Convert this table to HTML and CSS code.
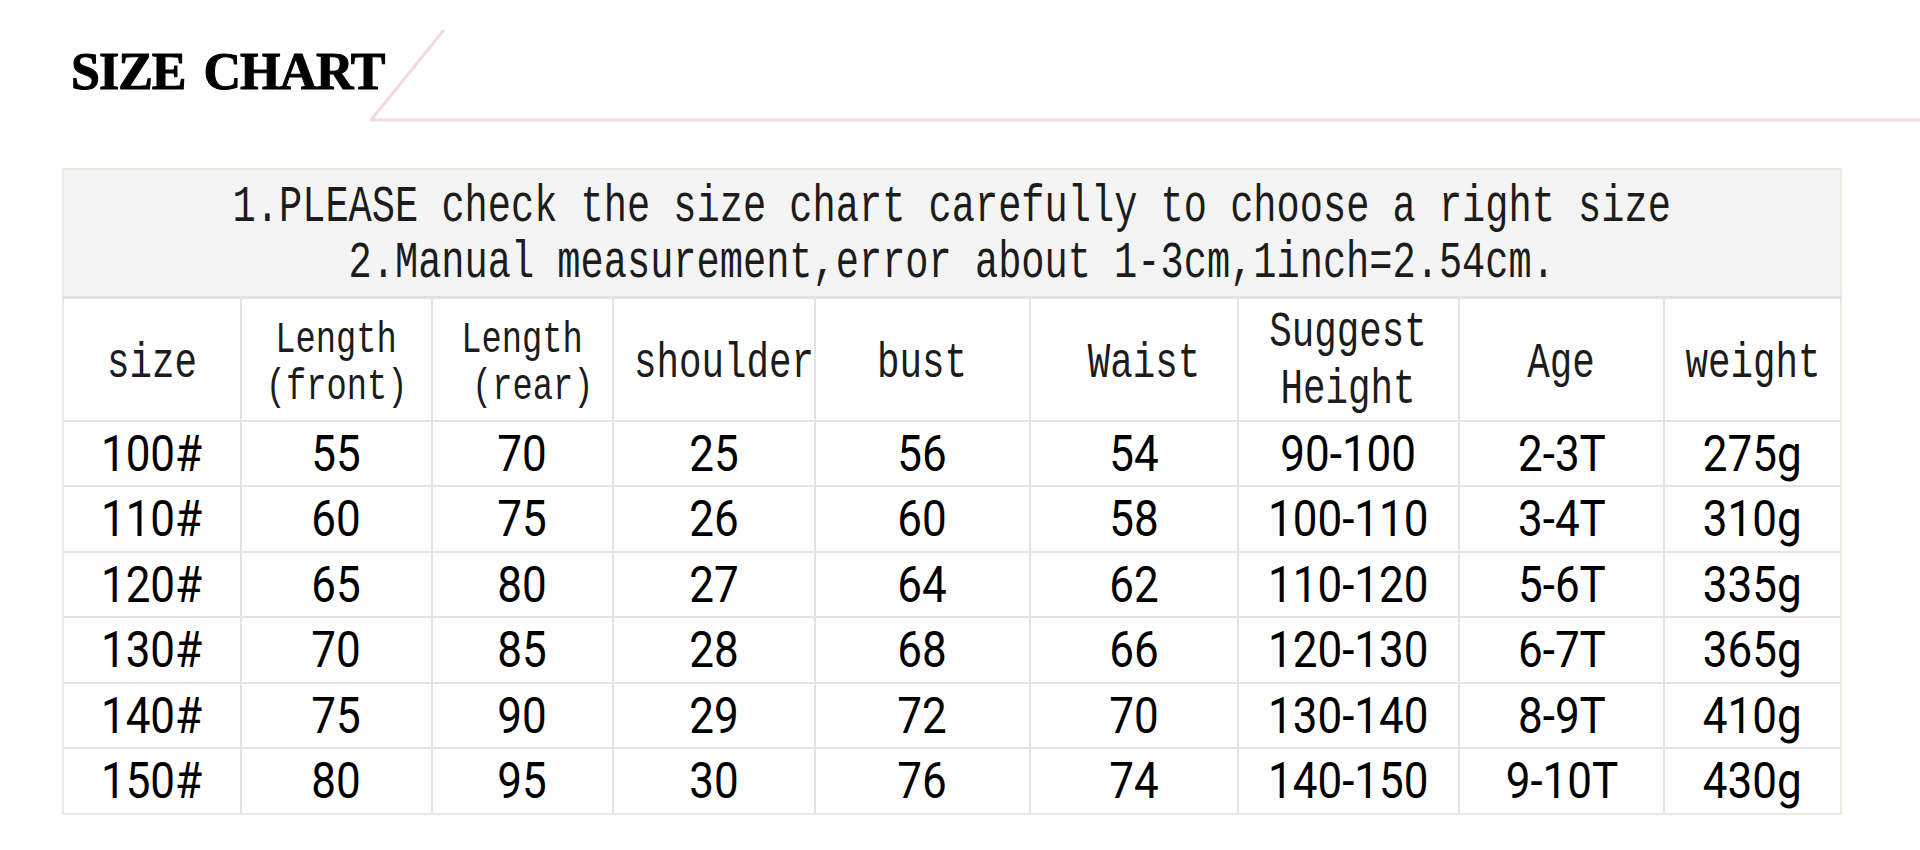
FILE: index.html
```html
<!DOCTYPE html>
<html lang="en">
<head>
<meta charset="utf-8">
<title>Size Chart</title>
<link rel="stylesheet" href="styles.css">
</head>
<body>
<header class="top">
  <h1 class="title">SIZE CHART</h1>
  <svg class="deco" width="1552" height="125" viewBox="0 0 1552 125" aria-hidden="true">
    <path d="M75 31 L3 120 L1552 120" fill="none" stroke="#f4dada" stroke-width="3" stroke-linecap="round" stroke-linejoin="round"/>
  </svg>
</header>
<table class="chart">
  <colgroup>
    <col style="width:178px"><col style="width:191px"><col style="width:181px">
    <col style="width:202px"><col style="width:215px"><col style="width:208px">
    <col style="width:221px"><col style="width:205px"><col style="width:177px">
  </colgroup>
  <tbody>
    <tr class="notes-row">
      <td colspan="9" class="note">
        <div class="line"><span>1.PLEASE check the size chart carefully to choose a right size</span></div>
        <div class="line"><span>2.Manual measurement,error about 1-3cm,1inch=2.54cm.</span></div>
      </td>
    </tr>
    <tr class="head-row">
      <th class="hd"><div class="stack"><span>size</span></div></th>
      <th class="hd"><div class="stack len"><span>Length</span><span>(front)</span></div></th>
      <th class="hd"><div class="stack len"><span>Length</span><span>&nbsp;(rear)</span></div></th>
      <th class="hd"><div class="stack shift"><span>shoulder</span></div></th>
      <th class="hd"><div class="stack"><span>bust</span></div></th>
      <th class="hd"><div class="stack shift"><span>Waist</span></div></th>
      <th class="hd"><div class="stack tall"><span>Suggest</span><span>Height</span></div></th>
      <th class="hd"><div class="stack"><span>Age</span></div></th>
      <th class="hd"><div class="stack"><span>weight</span></div></th>
    </tr>
    <tr class="row">
      <td class="num"><span>100#</span></td><td class="num"><span>55</span></td><td class="num"><span>70</span></td>
      <td class="num"><span>25</span></td><td class="num"><span>56</span></td><td class="num"><span>54</span></td>
      <td class="num"><span>90-100</span></td><td class="num"><span>2-3T</span></td><td class="num"><span>275g</span></td>
    </tr>
    <tr class="row alt">
      <td class="num"><span>110#</span></td><td class="num"><span>60</span></td><td class="num"><span>75</span></td>
      <td class="num"><span>26</span></td><td class="num"><span>60</span></td><td class="num"><span>58</span></td>
      <td class="num"><span>100-110</span></td><td class="num"><span>3-4T</span></td><td class="num"><span>310g</span></td>
    </tr>
    <tr class="row">
      <td class="num"><span>120#</span></td><td class="num"><span>65</span></td><td class="num"><span>80</span></td>
      <td class="num"><span>27</span></td><td class="num"><span>64</span></td><td class="num"><span>62</span></td>
      <td class="num"><span>110-120</span></td><td class="num"><span>5-6T</span></td><td class="num"><span>335g</span></td>
    </tr>
    <tr class="row alt">
      <td class="num"><span>130#</span></td><td class="num"><span>70</span></td><td class="num"><span>85</span></td>
      <td class="num"><span>28</span></td><td class="num"><span>68</span></td><td class="num"><span>66</span></td>
      <td class="num"><span>120-130</span></td><td class="num"><span>6-7T</span></td><td class="num"><span>365g</span></td>
    </tr>
    <tr class="row">
      <td class="num"><span>140#</span></td><td class="num"><span>75</span></td><td class="num"><span>90</span></td>
      <td class="num"><span>29</span></td><td class="num"><span>72</span></td><td class="num"><span>70</span></td>
      <td class="num"><span>130-140</span></td><td class="num"><span>8-9T</span></td><td class="num"><span>410g</span></td>
    </tr>
    <tr class="row alt">
      <td class="num"><span>150#</span></td><td class="num"><span>80</span></td><td class="num"><span>95</span></td>
      <td class="num"><span>30</span></td><td class="num"><span>76</span></td><td class="num"><span>74</span></td>
      <td class="num"><span>140-150</span></td><td class="num"><span>9-10T</span></td><td class="num"><span>430g</span></td>
    </tr>
  </tbody>
</table>
</body>
</html>
```

FILE: styles.css
```css
html, body {
  margin: 0;
  padding: 0;
  background: #ffffff;
}

body {
  width: 1920px;
  height: 850px;
  overflow: hidden;
}

.top {
  display: grid;
  grid-template-columns: 368px 1fr;
  height: 168px;
}

.title {
  margin: 46px 0 0 71px;
  font-family: "Liberation Serif", "Times New Roman", serif;
  font-weight: bold;
  font-size: 52px;
  line-height: 52px;
  letter-spacing: -1px;
  word-spacing: 6px;
  white-space: nowrap;
  color: #000;
  -webkit-text-stroke: 1px #000;
}

.deco {
  display: block;
}

.chart {
  margin-left: 62px;
  width: 1778px;
  table-layout: fixed;
  border-collapse: collapse;
  border: 2px solid #ebeae1;
}

.chart td,
.chart th {
  border: 2px solid #e4e4e4;
  padding: 0;
  text-align: center;
  vertical-align: middle;
}

.chart tr > :first-child { border-left-color: #ebeae1; }
.chart tr > :last-child { border-right-color: #ebeae1; }
.chart tr:first-child > * { border-top-color: #ebeae1; }
.chart tr:last-child > * { border-bottom-color: #ebeae1; }

.notes-row { height: 128px; }

.chart .note {
  background: #f4f4f4;
  vertical-align: top;
  padding-top: 10px;
  border-bottom-width: 3px;
  border-bottom-color: #e2e2e2;
  font-family: "Liberation Mono", "Courier New", monospace;
  font-size: 51px;
  color: #1c1c1c;
}

.line {
  display: flex;
  justify-content: center;
  height: 56px;
  line-height: 56px;
}

.line span {
  display: block;
  white-space: pre;
  transform: scaleX(0.758);
}

.head-row { height: 124px; }

.hd {
  font-family: "Liberation Mono", "Courier New", monospace;
  font-weight: normal;
  font-size: 50px;
  line-height: 50px;
  color: #1c1c1c;
}

.stack {
  display: flex;
  flex-direction: column;
  align-items: center;
  padding-top: 10px;
}

.stack span {
  display: block;
  white-space: pre;
  transform: scaleX(0.75);
}

.stack.len {
  font-size: 45px;
  line-height: 47px;
}

.stack.tall {
  line-height: 57px;
  padding-top: 4px;
}

.stack.shift {
  padding-left: 20px;
}

.row { height: 65px; }
.row.alt { height: 66px; }

.num {
  font-family: Roboto, "Noto Sans", sans-serif;
  font-size: 50px;
  line-height: 50px;
  color: #000;
}

.num span {
  display: inline-block;
  white-space: nowrap;
  transform: scaleX(0.88);
}
```
